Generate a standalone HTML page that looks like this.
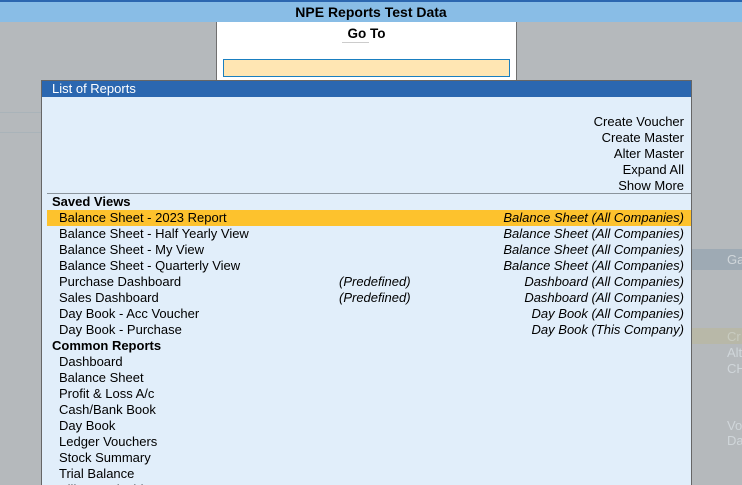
<!DOCTYPE html>
<html style="overflow:hidden;width:742px;height:485px"><head><style>
*{margin:0;padding:0;box-sizing:border-box}
body{width:742px;height:485px;overflow:hidden;background:#b5b9bc;font-family:"Liberation Sans",Arial,sans-serif;position:relative;font-size:13px;color:#000}
.a{position:absolute}
.row{position:absolute;left:0;width:644px;height:16px;line-height:16px}
.l{position:absolute;left:12px}
.r{position:absolute;right:7px;font-style:italic}
.m{position:absolute;left:292px;font-style:italic}
.h{position:absolute;left:5px;font-weight:bold}
.g{color:#d0d6da;position:absolute;font-size:13px}
</style></head><body>
<div class="a" style="left:0;top:0;width:742px;height:2px;background:#2c67b0"></div>
<div class="a" style="left:0;top:2px;width:742px;height:20px;background:#89bde6;text-align:center;font-weight:bold;font-size:14px;line-height:20px">NPE Reports Test Data</div>
<div class="a" style="left:0;top:112px;width:41px;height:1px;background:#a9b3b9"></div>
<div class="a" style="left:0;top:132px;width:41px;height:1px;background:#a9b3b9"></div>
<div class="a" style="left:691px;top:249px;width:51px;height:21px;background:#9eaab4"></div>
<div class="g" style="left:727px;top:252px">Ga</div>
<div class="a" style="left:691px;top:328px;width:51px;height:16px;background:#b8b8a8"></div>
<div class="g" style="left:727px;top:329px;color:#c8cbc0">Cr</div>
<div class="g" style="left:727px;top:345px">Alt</div>
<div class="g" style="left:727px;top:361px">CH</div>
<div class="g" style="left:727px;top:418px">Vo</div>
<div class="g" style="left:727px;top:433px">Da</div>
<div class="a" style="left:216px;top:22px;width:301px;height:60px;background:#fff;border-left:1px solid #707070;border-right:1px solid #707070"></div>
<div class="a" style="left:216px;top:26px;width:301px;text-align:center;font-weight:bold;font-size:13.5px">Go To</div>
<div class="a" style="left:342px;top:42px;width:27px;height:1px;background:#ccc"></div>
<div class="a" style="left:223px;top:59px;width:287px;height:18px;background:#ffe6b3;border:1px solid #1a7fc0"></div>
<div class="a" style="left:41px;top:80px;width:651px;height:405px;overflow:hidden;background:#e1eefa;border-left:1px solid #666;border-right:1px solid #666;border-top:1px solid #666">
 <div class="a" style="left:0;top:0;width:649px;height:16px;background:#2b67b0;color:#fff;line-height:16px;padding-left:10px;font-size:13px">List of Reports</div>
 <div class="a" style="right:7px;top:33px;text-align:right;line-height:16px">Create Voucher<br>Create Master<br>Alter Master<br>Expand All<br>Show More</div>
 <div class="a" style="left:5px;top:112px;width:644px;height:1px;background:#8a949c"></div>
 <div style="position:absolute;left:5px;top:113px">
 <div class="row" style="top:0"><span class="h">Saved Views</span></div>
 <div class="row" style="top:16px;background:#fdc22d"><span class="l">Balance Sheet - 2023 Report</span><span class="r">Balance Sheet (All Companies)</span></div>
 <div class="row" style="top:32px"><span class="l">Balance Sheet - Half Yearly View</span><span class="r">Balance Sheet (All Companies)</span></div>
 <div class="row" style="top:48px"><span class="l">Balance Sheet - My View</span><span class="r">Balance Sheet (All Companies)</span></div>
 <div class="row" style="top:64px"><span class="l">Balance Sheet - Quarterly View</span><span class="r">Balance Sheet (All Companies)</span></div>
 <div class="row" style="top:80px"><span class="l">Purchase Dashboard</span><span class="m">(Predefined)</span><span class="r">Dashboard (All Companies)</span></div>
 <div class="row" style="top:96px"><span class="l">Sales Dashboard</span><span class="m">(Predefined)</span><span class="r">Dashboard (All Companies)</span></div>
 <div class="row" style="top:112px"><span class="l">Day Book - Acc Voucher</span><span class="r">Day Book (All Companies)</span></div>
 <div class="row" style="top:128px"><span class="l">Day Book - Purchase</span><span class="r">Day Book (This Company)</span></div>
 <div class="row" style="top:144px"><span class="h">Common Reports</span></div>
 <div class="row" style="top:160px"><span class="l">Dashboard</span></div>
 <div class="row" style="top:176px"><span class="l">Balance Sheet</span></div>
 <div class="row" style="top:192px"><span class="l">Profit &amp; Loss A/c</span></div>
 <div class="row" style="top:208px"><span class="l">Cash/Bank Book</span></div>
 <div class="row" style="top:224px"><span class="l">Day Book</span></div>
 <div class="row" style="top:240px"><span class="l">Ledger Vouchers</span></div>
 <div class="row" style="top:256px"><span class="l">Stock Summary</span></div>
 <div class="row" style="top:272px"><span class="l">Trial Balance</span></div>
 <div class="row" style="top:288px"><span class="l">Bills Receivable</span></div>
 </div>
</div>
</body></html>
